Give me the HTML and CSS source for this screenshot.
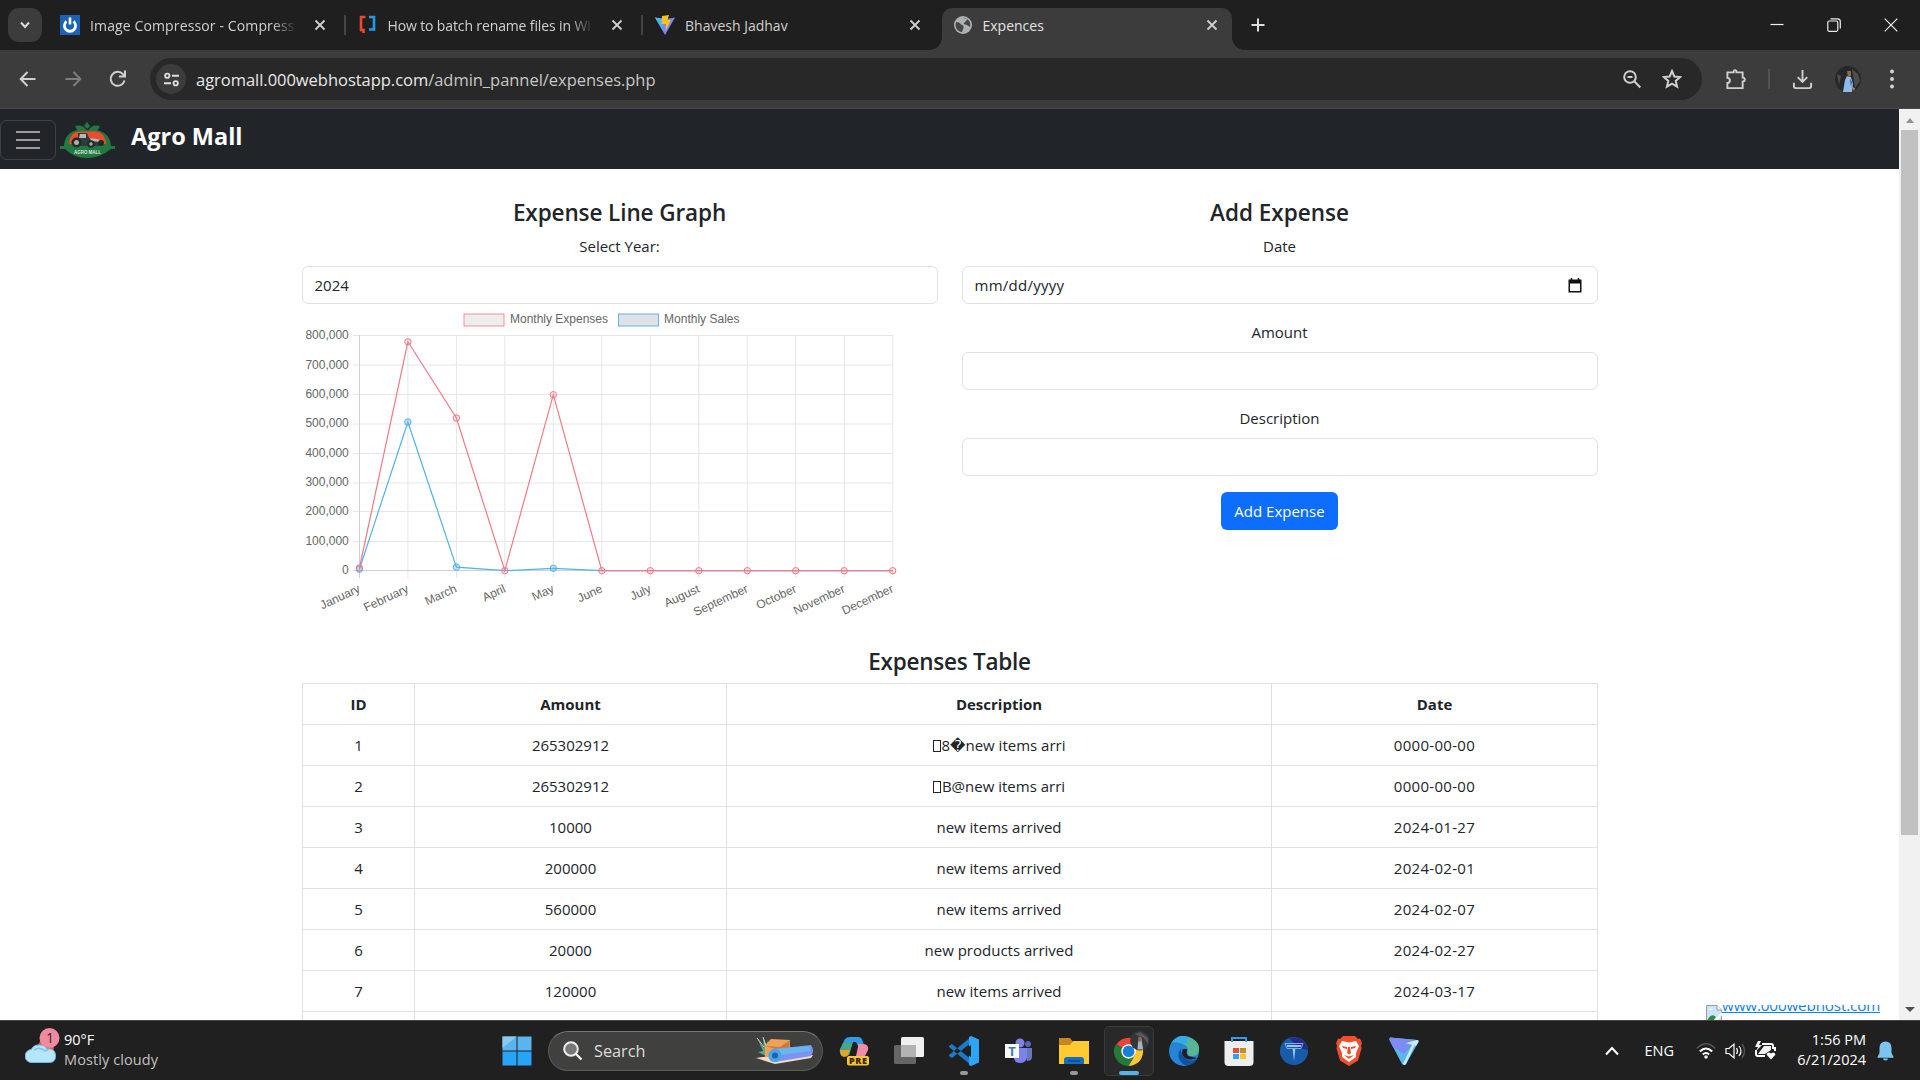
FILE: index.html
```
<!DOCTYPE html>
<html lang="en">
<head>
<meta charset="utf-8">
<title>Expences</title>
<link rel="stylesheet" href="styles.css">
</head>
<body>
<header class="tabstrip">
  <button class="tab-search"><svg width="14" height="14" viewBox="0 0 14 14"><path d="M3 4.500l4 4.500 4-4.500" class="ln w2"/></svg></button>
  <div class="tab">
    <svg class="fav" viewBox="0 0 20 20"><rect width="20" height="20" fill="#1c63b7"/><path d="M6.500 6.300A5.600 5.600 0 1 0 13.500 6.300" fill="none" stroke="#fff" stroke-width="2.800"/><path d="M10 2.500v7" stroke="#fff" stroke-width="2.600"/></svg>
    <span class="tab-title fade t1">Image Compressor - Compress</span>
    <svg class="x" viewBox="0 0 12 12"><path d="M1.500 1.500l9 9m0-9l-9 9"/></svg>
  </div>
  <div class="tab">
    <svg class="fav" viewBox="0 0 20 20"><path d="M7.500 2H3v13h2.500v3" fill="none" stroke="#f0482f" stroke-width="2.600"/><path d="M11 2h5v12.500h-5" fill="none" stroke="#1e9bf0" stroke-width="2.600"/></svg>
    <span class="tab-title fade t2">How to batch rename files in Wi</span>
    <svg class="x" viewBox="0 0 12 12"><path d="M1.500 1.500l9 9m0-9l-9 9"/></svg>
  </div>
  <div class="tab last">
    <svg class="fav" viewBox="0 0 20 20"><path d="M0 2.500L10 20 20 2.500l-9 1.600z" fill="#7b83f5"/><path d="M0 2.500l7 1.200 1 12z" fill="#47b5f0"/><path d="M7 1l7-1-1.500 5H16l-5.500 11 .5-7H6.500z" fill="#fcc21b"/></svg>
    <span class="tab-title t3">Bhavesh Jadhav</span>
    <svg class="x" viewBox="0 0 12 12"><path d="M1.500 1.500l9 9m0-9l-9 9"/></svg>
  </div>
  <div class="tab active">
    <svg class="fav globe" viewBox="0 0 18 18"><circle cx="9" cy="9" r="9" fill="#aeb1b3"/><path d="M2 6c3 0 4 1 5 2.500 2 1 3 1 2.500 3.500L8 16C4 15.500 1.500 12.500 1.600 9zM9 1.800c1 0 3 .3 4.500 1.500L11 6 9.500 8 13 9l3 2c.8-3 0-6-2.500-7.700z" fill="#474747"/></svg>
    <span class="tab-title t4">Expences</span>
    <svg class="x" viewBox="0 0 12 12"><path d="M1.500 1.500l9 9m0-9l-9 9"/></svg>
  </div>
  <svg class="newtab" viewBox="0 0 14 14"><path d="M7 .5v13M.5 7h13" class="ln w2"/></svg>
  <div class="window-buttons">
    <svg viewBox="0 0 14 14"><path d="M.5 6.500h13" class="ln"/></svg>
    <svg viewBox="0 0 14 14"><rect x=".8" y="3" width="10" height="10.300" rx="1.500" class="ln"/><path d="M3.500 .8h7q2.800 0 2.800 2.800v7" class="ln"/></svg>
    <svg viewBox="0 0 14 14"><path d="M.7.7l12.600 12.600m0-12.600L.7 13.300" class="ln"/></svg>
  </div>
</header>

<div class="toolbar">
  <div class="nav-icons">
    <svg viewBox="0 0 20 20"><path d="M17.500 10H3M9.500 3L2.700 10l6.800 7" class="ln w2"/></svg>
    <svg viewBox="0 0 20 20" class="dim"><path d="M2.500 10H17M10.500 3l6.800 7-6.800 7" class="ln w2"/></svg>
    <svg viewBox="0 0 20 20"><path d="M16.500 11.500A7 7 0 1 1 15 5.200L17 7M17 1.500V7.500H11" class="ln w2"/></svg>
  </div>
  <div class="omnibox">
    <span class="siteinfo"><svg width="17" height="15" viewBox="0 0 18 16"><circle cx="4.500" cy="4" r="2.300" class="ln w2"/><circle cx="13.500" cy="12" r="2.300" class="ln w2"/><path d="M9.500 4H17M1 12h7.500" class="ln w2"/></svg></span>
    <span class="url">agromall.000webhostapp.com<i>/admin_pannel/expenses.php</i></span>
    <svg class="ob" viewBox="0 0 20 20"><circle cx="8" cy="8" r="5.800" class="ln w2"/><path d="M12.300 12.300l6 6.200M5.500 8h5" class="ln w2"/></svg>
    <svg class="ob" viewBox="0 0 20 20"><path d="M10 2l2.300 5.500 5.900.5-4.500 3.900 1.400 5.800L10 14.600l-5.100 3.100 1.400-5.800L1.800 8l5.900-.5z" class="ln w2"/></svg>
  </div>
  <svg class="ext" viewBox="0 0 22 24"><path d="M3 4.500h6C8.500 1.500 12.500 1.500 12 4.500h6.500V10c3 0 3 4 0 4.300V21H2.500v-5.500c3.500 0 3.500-5 0-5.200V4.500z" class="ln w2"/></svg>
  <i class="vsep"></i>
  <svg class="dl" viewBox="0 0 22 22"><path d="M11 1v12M6 8.500l5 5 5-5M2 14.500v3.700q0 1.800 1.800 1.800h14.400q1.800 0 1.800-1.800v-3.700" class="ln w2"/></svg>
  <svg class="avatar" viewBox="0 0 26 26"><circle cx="13" cy="13" r="13" fill="#25282a"/><path d="M17 3l6 5 2 7-5 7zM2 8l4 2-2 9z" fill="#4b4d4f"/><path d="M10 14l2-4 4 1 2 7-1 8H8z" fill="#8fb9e8"/><path d="M12 5h4v5l-3 1z" fill="#95683f"/><path d="M15 13l2 3-1 5z" fill="#335b9c"/><path d="M17 21l3 1-1 3z" fill="#d28a4d"/></svg>
  <svg class="dots" viewBox="0 0 6 20"><circle cx="3" cy="2.500" r="2"/><circle cx="3" cy="10" r="2"/><circle cx="3" cy="17.500" r="2"/></svg>
</div>

<div class="viewport">
  <div class="page">
    <nav class="navbar">
      <button class="toggler"><i></i><i></i><i></i></button>
      <svg class="logo" viewBox="0 0 55 36"><path d="M27 0l3 4-2.500 3L24 4zM15 4q8-2 12 5-9 3-12-5zM40 4q-8-2-12 5 9 3 12-5z" fill="#217a41"/><path d="M4 24Q5 10 18 8h19q13 3 14 16l4 0v3H51Q40 36 27 36T5 27H0v-3z" fill="#217a41"/><path d="M9 22Q10 9 21 9.500h14Q45 10 46 22z" fill="#ee4b2b"/><path d="M18 11h9l2 5 14 3v5H15l-1-6 4-1z" fill="#2c3e38"/><path d="M20 12h6v4h-7zM30 16l10 1.500-1 2.500-8-1z" fill="#b6b9b5"/><circle cx="16.500" cy="20.500" r="5" fill="#24292a"/><circle cx="16.500" cy="20.500" r="2.500" fill="#aab1ad"/><circle cx="31" cy="22" r="3.800" fill="#24292a"/><circle cx="31" cy="22" r="1.700" fill="#aab1ad"/><circle cx="41" cy="21" r="3" fill="#24292a"/><text x="14" y="31.500" textLength="27" font-size="4.500" font-weight="700" fill="#dfe6df" font-family="Liberation Sans, sans-serif">AGRO MALL</text></svg>
      <span class="brand">Agro Mall</span>
    </nav>

    <main class="container">
      <div class="columns">
        <section class="col">
          <h4 class="h-graph">Expense Line Graph</h4>
          <label class="l-year">Select Year:</label>
          <div class="control">2024</div>
          <svg class="chart" viewBox="302 304 636 320">
            <g class="grid">
              <path d="M353 335.500H892.700M353 365H892.700M353 394.500H892.700M353 424H892.700M353 453.500H892.700M353 483H892.700M353 511.500H892.700M353 541.500H892.700"/>
              <path d="M407.900 335V578M456.400 335V578M504.800 335V578M553.300 335V578M601.800 335V578M650.300 335V578M698.800 335V578M747.300 335V578M795.700 335V578M844.200 335V578M892.700 335V578"/>
              <path class="axis" d="M359.500 335V578M353 570.500H892.700"/>
            </g>
            <g class="legend">
              <rect x="464" y="314" width="40" height="12" fill="#efeeee" stroke="#f2919e"/>
              <text x="510" y="323" textLength="98">Monthly Expenses</text>
              <rect x="618.500" y="314" width="40" height="12" fill="#dfe2e4" stroke="#5fb8ea"/>
              <text x="664" y="323" textLength="75.500">Monthly Sales</text>
            </g>
            <g class="yt">
              <text x="348.800" y="339">800,000</text><text x="348.800" y="369">700,000</text><text x="348.800" y="398">600,000</text><text x="348.800" y="427.400">500,000</text><text x="348.800" y="457">400,000</text><text x="348.800" y="486">300,000</text><text x="348.800" y="515.400">200,000</text><text x="348.800" y="545">100,000</text><text x="348.800" y="574">0</text>
            </g>
            <g class="yt">
              <text transform="translate(361 591.500) rotate(-25)">January</text><text transform="translate(409.500 591.500) rotate(-25)">February</text><text transform="translate(457.500 591.500) rotate(-25)">March</text><text transform="translate(506.400 591.500) rotate(-25)">April</text><text transform="translate(554.900 591.500) rotate(-25)">May</text><text transform="translate(603.400 591.500) rotate(-25)">June</text><text transform="translate(651.900 591.500) rotate(-25)">July</text><text transform="translate(700.400 591.500) rotate(-25)">August</text><text transform="translate(748.900 591.500) rotate(-25)">September</text><text transform="translate(797.300 591.500) rotate(-25)">October</text><text transform="translate(845.800 591.500) rotate(-25)">November</text><text transform="translate(894.300 591.500) rotate(-25)">December</text>
            </g>
            <g class="sales"><path d="M359.400 569.200L407.900 422L456.400 567.200L504.800 570.700L553.300 568.300L601.800 570.700H892.700"/><circle cx="359.400" cy="569.200" r="3.200"/><circle cx="407.900" cy="422" r="3.200"/><circle cx="456.400" cy="567.200" r="3.200"/><circle cx="553.300" cy="568.300" r="3.200"/></g>
            <g class="expenses"><path d="M359.400 568L407.900 341.800L456.400 418L504.800 570.700L553.300 394.700L601.800 570.700H892.700"/><circle cx="359.400" cy="568" r="3.200"/><circle cx="407.900" cy="341.800" r="3.200"/><circle cx="456.400" cy="418" r="3.200"/><circle cx="504.800" cy="570.700" r="3.200"/><circle cx="553.300" cy="394.700" r="3.200"/><circle cx="601.800" cy="570.700" r="3.200"/><circle cx="650.300" cy="570.700" r="3.200"/><circle cx="698.800" cy="570.700" r="3.200"/><circle cx="747.300" cy="570.700" r="3.200"/><circle cx="795.700" cy="570.700" r="3.200"/><circle cx="844.200" cy="570.700" r="3.200"/><circle cx="892.700" cy="570.700" r="3.200"/></g>
          </svg>
        </section>
        <section class="col">
          <h4 class="h-add">Add Expense</h4>
          <label>Date</label>
          <div class="control date"><span class="mask">mm/dd/yyyy</span><svg width="14" height="15" viewBox="0 0 14 15"><path d="M.5 1.500h13v13H.5zM2 5.500V13h10V5.500z" fill="#111" fill-rule="evenodd"/><path d="M3.500 0v2M10.500 0v2" stroke="#111" stroke-width="1.500"/></svg></div>
          <label>Amount</label>
          <div class="control"></div>
          <label>Description</label>
          <div class="control"></div>
          <button class="btn">Add Expense</button>
        </section>
      </div>
      <h4 class="h-table">Expenses Table</h4>
      <table>
        <colgroup><col class="c1"><col class="c2"><col class="c3"><col class="c4"></colgroup>
        <tr><th>ID</th><th>Amount</th><th>Description</th><th>Date</th></tr>
        <tr><td>1</td><td>265302912</td><td><i class="tofu"></i>8<span class="rep">&#xFFFD;</span>new items arri</td><td class="d">0000-00-00</td></tr>
        <tr><td>2</td><td>265302912</td><td><i class="tofu"></i>B@new items arri</td><td class="d">0000-00-00</td></tr>
        <tr><td>3</td><td>10000</td><td>new items arrived</td><td class="d">2024-01-27</td></tr>
        <tr><td>4</td><td>200000</td><td>new items arrived</td><td class="d">2024-02-01</td></tr>
        <tr><td>5</td><td>560000</td><td>new items arrived</td><td class="d">2024-02-07</td></tr>
        <tr><td>6</td><td>20000</td><td>new products arrived</td><td class="d">2024-02-27</td></tr>
        <tr><td>7</td><td>120000</td><td>new items arrived</td><td class="d">2024-03-17</td></tr>
        <tr><td></td><td></td><td></td><td></td></tr>
      </table>
    </main>
    <a class="hostlink"><svg width="16" height="16" viewBox="0 0 16 16"><path d="M.5.500H11L15.500 5V16H.5z" fill="#c9e6f7" stroke="#9a9a9a"/><path d="M11 .5V5h4.500" fill="#fff" stroke="#9a9a9a"/><path d="M3 5q2-3 4 0z" fill="#fff"/><path d="M1 16q4-9 9-4l-3 4z" fill="#2e8b45"/><path d="M7 16l9-9v3l-5 6z" fill="#fff"/></svg><span>www.000webhost.com</span></a>
  </div>
  <div class="scrollbar"><i class="up"></i><i class="thumb"></i><i class="down"></i></div>
</div>

<footer class="taskbar">
  <div class="weather">
    <svg width="38" height="38" viewBox="0 0 38 38"><circle cx="21" cy="19" r="8" fill="#ee5a24"/><path d="M7 34.500a6.500 6.500 0 0 1-.8-13Q9 16.500 14 17q6-.5 8 4 8-1 8.500 6 .5 7.500-6 7.500z" fill="#b5e6fb" stroke="#74b5f4"/><path d="M9 22q6-4 11 1l4-2" stroke="#7cc2f4" stroke-width="1.600" fill="none"/><circle cx="24.500" cy="10" r="10" fill="#f08aa0"/><text x="25" y="15" font-size="14" text-anchor="middle" fill="#33262a">1</text></svg>
    <p class="wtxt"><span class="temp">90°F</span><span class="cond">Mostly cloudy</span></p>
  </div>
  <div class="apps">
    <span class="app"><svg viewBox="0 0 30 30"><path d="M.5.500h14v14H.5zM15.500.500h14v14h-14z" fill="#5ab4ee"/><path d="M.5 15.500h14v14H.5zM15.500 15.500h14v14h-14z" fill="#27a4f8"/><path d="M.5.500h14L.5 12z" fill="#8bcaf0"/></svg></span>
    <div class="search">
      <svg width="20" height="20" viewBox="0 0 20 20"><circle cx="8" cy="8" r="6.800" fill="#777" stroke="#eee" stroke-width="2"/><path d="M13 13l5.500 5.500" stroke="#eee" stroke-width="2.400"/></svg>
      <span>Search</span>
      <svg class="beach" width="60" height="28" viewBox="0 0 60 28"><path d="M0 21l14-2 43-1-2 3-36 6z" fill="#f4d9c6"/><path d="M2 3l6 8-1-10 5 10-1-8 4 11-5 5-8-4 5-1z" fill="#4fae8c"/><path d="M1 1l7 9M7 0l3 9" stroke="#d4d4d4"/><path d="M9 8l6-6 19 1v10L21 20H9z" fill="#f0a158"/><path d="M9 9l15 1 10-7-1 8-10 2z" fill="#cc7a38"/><path d="M18 12l37-4q4 6 0 11l-36 6z" fill="#7d92f4"/><path d="M18 12l36-3v5l-36 5z" fill="#67b6ed"/><circle cx="19" cy="18.500" r="6.800" fill="#4aa5e8"/><circle cx="19" cy="18.500" r="3" fill="#2162a9"/></svg>
    </div>
    <span class="app"><svg viewBox="0 0 30 30"><path d="M6 3q2-2 5-2h8q4 0 5 5l1 4h-6l-2-4h-3l-4 13-7 1q-3-3-2-7z" fill="#2f9de4"/><path d="M4 7h9l-3 12q-1 1-4 1-5-1-4-6z" fill="#4ca77c"/><path d="M1 14h10l-2 5q-1 2-4 2-4-1-4-6z" fill="#e3a42a"/><path d="M19 8h6q5 1 4 6l-3 6h-9l2-9z" fill="#ef8ca7"/><rect x="8" y="20" width="22" height="9.500" rx="2" fill="#fcc62e"/><text x="10" y="27.800" font-size="9" font-weight="800" textLength="18" fill="#332700">PRE</text></svg></span>
    <span class="app"><svg viewBox="0 0 30 30"><rect x="0" y="9" width="22" height="19" rx="1.500" fill="#656567"/><rect x="7" y="1" width="23" height="20" rx="1.500" fill="#f0f0f0"/><path d="M7 9h15v12H7z" fill="#b3b3b3"/></svg></span>
    <span class="app run"><svg viewBox="0 0 30 30"><path d="M0 10l3-2 20 16v6L0 11zM0 20l3 2L23 6V0L0 19z" fill="#1c79c8"/><path d="M22 0l8 3.500v23L22 30 20 29V1z" fill="#2ba5f7"/><path d="M22 9v12l-8-6z" fill="#202020"/></svg></span>
    <span class="app"><svg viewBox="0 0 30 30"><circle cx="16" cy="7" r="4.500" fill="#7b83eb"/><circle cx="24" cy="8" r="3" fill="#5963b9"/><path d="M20 12h8v9q0 4-5 4z" fill="#6877bd"/><path d="M10 12h13v9q-1 6-7 6-5 0-6-5z" fill="#7b83eb"/><rect x="1" y="8" width="14" height="14" fill="#f7f8fa"/><text x="8" y="20" text-anchor="middle" font-size="13" font-weight="700" fill="#3e80a4">T</text></svg></span>
    <span class="app run"><svg viewBox="0 0 30 30"><path d="M0 2h11l3 4h12v8H0z" fill="#c98522"/><path d="M0 9h11l3-4h16v23H0z" fill="#ffcb30"/><path d="M5 28v-4q0-3 3-3h14q3 0 3 3v4z" fill="#176dbd"/><path d="M9 25h12" stroke="#0c4a91" stroke-width="1.500"/></svg></span>
    <span class="app current"><svg class="wide" viewBox="0 0 38 36"><path d="M15 21L2.500 14A15 15 0 0 1 28 14z" fill="#ea4534"/><path d="M15 21L2 13.500A15 15 0 0 0 15 36l7-12z" fill="#26793a"/><path d="M15 21L28.200 14A15 15 0 0 1 15 36l7-12z" fill="#fcc72f"/><circle cx="15" cy="21" r="7.500" fill="#fff"/><circle cx="15" cy="21" r="6" fill="#1a7fd6"/><circle cx="26.500" cy="10" r="10" fill="#34363a"/><path d="M21 3l6-2 8 6v6l-5-6z" fill="#55585c"/><path d="M24 19l1-9 3-3 2 12z" fill="#a5b2c4"/><path d="M25 6h3v5h-3z" fill="#9a6b46"/></svg></span>
    <span class="app"><svg viewBox="0 0 30 30"><circle cx="15" cy="15" r="15" fill="#2584d8"/><path d="M4 5Q13-3 24 3q7 4 6 12-1 5-7 5-6 0-4-6 0-4-5-6Q7 6 4 5z" fill="#56b797"/><path d="M2 7Q9-3 19 1q-1 3-1 7Q8 5 2 7z" fill="#35a8ee"/><path d="M12 12q-6 9 2 16 8 4 14-5-6 3-11 0-6-4-5-11z" fill="#12509d"/><path d="M14 13q-3 5 2 9 5 3 12 0l-9-2q-2-3-1-7z" fill="#202020"/></svg></span>
    <span class="app"><svg viewBox="0 0 30 30"><path d="M.5 5h29v21q0 4-4 4H4.500q-4 0-4-4z" fill="#eee"/><path d="M8 6V2h14v4" fill="none" stroke="#2b9ef1" stroke-width="2"/><path d="M9 12h6v5H9z" fill="#eb4c2f"/><path d="M16 12h6v5h-6z" fill="#c58d27"/><path d="M9 18h6v5H9z" fill="#2aa4f5"/><path d="M16 18h6v5h-6z" fill="#fcc52e"/></svg></span>
    <span class="app"><svg viewBox="0 0 30 30"><circle cx="15" cy="15" r="14" fill="#165ca9"/><path d="M10 2Q25-1 29 14L20 12z" fill="#26288a"/><path d="M8 10h14" stroke="#a2c4eb" stroke-width="2"/><path d="M13.500 12h3L15 25z" fill="#a2c4eb"/><path d="M6 7.500h18l-2 5H8z" fill="none" stroke="#7caee4" stroke-width="1"/></svg></span>
    <span class="app"><svg viewBox="0 0 30 30"><path d="M9 0h12l3 3 2-.5 2 5-1 2 .5 3-3.500 12L15 30 6 24.500 2.500 12.500l.5-3L2 7.500l2-5 2 .5z" fill="#f04e2c"/><path d="M8 5l7 1.500L22 5l3 5-3 7v4l-7 5-7-5v-4l-3-7z" fill="#fff"/><path d="M8 10l5 1v2l-4-1zM22 10l-5 1v2l4-1zM14 11h2l1 6-2 1.500L13 17zM10 19l5 1.500 5-1.500-5 4z" fill="#f04e2c"/></svg></span>
    <span class="app"><svg viewBox="0 0 30 30"><path d="M1 1.500Q-.5 3 1 5l12 23q2 2 4 0L29.500 6Q30 4 28 4z" fill="#5cb8ec"/><path d="M28 4L17 28q-1.500 2-3 0l9-19z" fill="#c3edf8"/><path d="M1 1.500L28 4 15 8l8 1-8 9L4 11 1 5z" fill="#7c8cf4"/><path d="M17 7l11-3q2 0 1.500 2L27 10z" fill="#c3edf8"/></svg></span>
  </div>
  <div class="tray">
    <svg class="chev" width="16" height="10" viewBox="0 0 16 10"><path d="M2 8.500L8 2l6 6.500" class="ln w2"/></svg>
    <span class="lang">ENG</span>
    <svg class="wifi" width="20" height="18" viewBox="0 0 20 18"><path d="M.8 6.500Q10-3 19.200 6.500" fill="none" stroke="#555" stroke-width="1.600"/><path d="M3.800 9.500q6.200-6 12.400 0M6.800 12.500q3.200-3 6.400 0" class="ln w2"/><circle cx="10" cy="15" r="1.800" fill="#eee"/></svg>
    <svg class="snd" width="21" height="18" viewBox="0 0 21 18"><path d="M1 6.500h3L9 2v14l-5-4.500H1zM11.500 6q2 3 0 6M14 4q4 5 0 10" class="ln"/><path d="M17 2q5 7 0 14" fill="none" stroke="#555" stroke-width="1.400"/></svg>
    <svg class="bat" width="21" height="19" viewBox="0 0 21 19"><path d="M7 3h9q2 0 2 2v2h2v3M10 15H3q-2 0-2-2V9" class="ln w2"/><path d="M3 0L0 6h3L1 10l6-6H4l2-4zM9 5h7v4l-6 4H3z" fill="#f3f3f3"/><path d="M16 18.500l-4.500-5q1.500-3.500 4.500-1 3-2.500 4.500 1z" fill="#fff"/></svg>
    <p class="clock"><span>1:56 PM</span><span class="day">6/21/2024</span></p>
    <svg class="bell" width="17" height="20" viewBox="0 0 17 20"><path d="M2.500 12V7q0-6.500 6-6.500t6 6.500v5l2 4v.7H.5V16z" fill="#7cc4ef"/><path d="M6 17.500h5q0 2-2.500 2T6 17.500z" fill="#7cc4ef"/></svg>
  </div>
</footer>
</body>
</html>
```
FILE: styles.css
```
* { box-sizing: border-box; }
html, body { margin: 0; height: 100%; overflow: hidden; }
body { display: flex; flex-direction: column; width: 1920px; height: 1080px; font-family: "Open Sans", "Noto Sans", sans-serif; font-size: 15px; background: #fff; color: #212529; }
svg { display: block; flex: none; }
p { margin: 0; }
button { font: inherit; padding: 0; border: 0; }
.ln { fill: none; stroke: currentColor; stroke-width: 1.2; }
.ln.w2 { stroke-width: 2; }

.tabstrip { height: 50px; flex: none; display: flex; align-items: center; background: #1f1f1f; color: #d0d0d0; padding-left: 8px; }
.tab-search { width: 34px; height: 34px; margin-right: 6px; border-radius: 11px; background: #3c3c3c; color: #ddd; display: flex; align-items: center; justify-content: center; }
.tab { width: 297.500px; height: 34px; display: flex; align-items: center; padding: 0 20px 0 12px; position: relative; font-size: 14px; }
.tab:not(.last):not(.active)::after { content: ""; width: 2px; height: 20px; background: #444; position: absolute; right: 0; top: 7px; }
.fav { width: 20px; height: 20px; margin-right: 10px; }
.tab-title { flex: 1; white-space: nowrap; overflow: hidden; }
.fade { -webkit-mask-image: linear-gradient(to right, #000 88%, transparent); mask-image: linear-gradient(to right, #000 88%, transparent); margin-right: 17px; }
.t1 { letter-spacing: .13px; }
.t2 { letter-spacing: -.13px; }
.x { width: 12px; height: 12px; fill: none; stroke: #d0d0d0; stroke-width: 1.800; }
.tab.active { width: 290px; height: 42px; align-self: flex-end; background: #3c3c3c; border-radius: 10px 10px 0 0; color: #e3e3e3; margin-left: 1px; padding: 0 14px 8px 12px; }
.tab.active::before, .tab.active::after { content: ""; position: absolute; bottom: 0; width: 12px; height: 12px; }
.tab.active::before { left: -12px; background: radial-gradient(circle at 0 0, transparent 11.500px, #3c3c3c 12px); }
.tab.active::after { right: -12px; background: radial-gradient(circle at 100% 0, transparent 11.500px, #3c3c3c 12px); }
.globe { width: 18px; height: 18px; margin-right: 11px; }
.newtab { width: 14px; height: 14px; margin-left: 19px; color: #ddd; }
.window-buttons { margin-left: auto; display: flex; gap: 43px; padding-right: 22px; color: #eee; }
.window-buttons svg { width: 14px; height: 14px; }

.toolbar { height: 59px; flex: none; display: flex; align-items: center; background: #3c3c3c; color: #cfcfcf; border-bottom: 1px solid #474747; }
.nav-icons { display: flex; gap: 25px; padding-left: 18px; width: 150px; }
.nav-icons svg { width: 20px; height: 20px; }
.dim { color: #7d7d7d; }
.omnibox { width: 1552px; height: 42px; border-radius: 21px; background: #282828; display: flex; align-items: center; padding: 0 20px 0 6px; gap: 20px; }
.siteinfo { width: 30px; height: 30px; border-radius: 50%; background: #3c3c3c; display: flex; align-items: center; justify-content: center; margin-right: -10px; color: #ddd; }
.url { flex: 1; font-size: 16.500px; letter-spacing: -.03px; color: #e8e8e8; }
.url i { font-style: normal; color: #c7c7c7; }
.ob { width: 20px; height: 20px; }
.ext { width: 21px; height: 23px; margin-left: 23px; }
.vsep { width: 2px; height: 20px; background: #515355; margin-left: 22px; }
.dl { width: 21px; height: 21px; margin-left: 22px; }
.avatar { width: 26px; height: 26px; margin-left: 22px; }
.dots { width: 6px; height: 20px; margin-left: 28px; fill: #d3d3d3; }

.viewport { height: 911px; flex: none; display: flex; overflow: hidden; }
.page { width: 1899px; overflow: hidden; position: relative; }
.navbar { height: 60px; background: #212529; display: flex; align-items: center; }
.toggler { width: 56px; height: 40px; border: 1px solid #3d4145; border-radius: 6px; background: none; display: flex; flex-direction: column; align-items: center; justify-content: center; gap: 6px; margin: 2px 4px 0 0; }
.toggler i { width: 24px; height: 2px; background: #9b9d9f; }
.logo { width: 55px; height: 36px; margin-top: 2px; }
.brand { margin: -7px 0 0 16px; font-size: 23.500px; font-weight: 700; color: #fff; }

.container { width: 1320px; margin: 0 auto; padding: 28px 12px 0; }
.columns { display: grid; grid-template-columns: 1fr 1fr; gap: 24px; height: 448px; }
.col { display: flex; flex-direction: column; align-items: center; }
h4 { margin: 0; height: 29px; line-height: 31px; font-size: 22.500px; font-weight: 600; text-align: center; }
.h-graph { letter-spacing: -.1px; }
label { line-height: 24px; margin: 8px 0; }
.control { width: 100%; height: 38px; border: 1px solid #dee2e6; border-radius: 6px; padding: 0 12px; line-height: 36px; display: flex; align-items: center; justify-content: space-between; }
.control + label { margin-top: 16px; }
.date { padding-right: 15px; }
.mask { letter-spacing: .25px; }
.chart { width: 636px; height: 320px; }
.chart text { font: 12px "Liberation Sans", Arial, sans-serif; fill: #666; }
.yt text { text-anchor: end; }
.grid path { fill: none; stroke: #e6e6e6; stroke-width: 1; }
.grid .axis { stroke: #cfd2d3; }
.sales path, .expenses path { fill: none; stroke-width: 1.200; }
.sales { stroke: #50b2ea; fill: #59b8ec55; }
.expenses { stroke: #ee7a88; fill: #f0879433; }
.btn { margin-top: 16px; width: 117px; height: 38px; border-radius: 6px; background: #0d6efd; color: #fff; }
.h-table { margin-top: 2px; line-height: 29px; letter-spacing: -.25px; }
table { width: 1296px; margin-top: 7px; border-collapse: collapse; table-layout: fixed; text-align: center; }
.c1 { width: 112px; } .c2 { width: 312px; } .c3 { width: 545px; } .c4 { width: 326px; }
td, th { height: 41px; padding: 0 0 1px 1px; border: 1px solid #dee2e6; }
.d { letter-spacing: .3px; }
.tofu { display: inline-block; width: 8px; height: 12px; border: 1px solid #212529; margin-right: 1px; vertical-align: -1px; }
.rep { font-family: "DejaVu Sans", sans-serif; font-size: 15px; line-height: 1; }
.hostlink { position: absolute; right: 19px; bottom: 0; height: 15px; display: flex; overflow: hidden; color: #0d7ff0; }
.hostlink span { width: 158px; font-size: 15.200px; letter-spacing: -.13px; white-space: nowrap; line-height: 18px; margin-top: -9px; height: 24px; text-decoration: underline; }
.scrollbar { width: 21px; background: #f1f1f1; display: flex; flex-direction: column; align-items: center; padding: 9px 0 8px; }
.up { border: 4px solid transparent; border-top: 0; border-bottom: 5px solid #929292; }
.thumb { width: 17px; height: 705px; background: #c1c1c1; margin-top: 7px; }
.down { border: 5px solid transparent; border-bottom: 0; border-top: 5px solid #505050; margin-top: auto; }

.taskbar { height: 60px; flex: none; background: #202020; border-top: 1px solid #424242; display: flex; align-items: center; color: #fff; }
.weather { width: 490px; padding-left: 25px; display: flex; align-items: center; gap: 1px; }
.weather svg { margin-top: -8px; }
.wtxt, .clock { display: flex; flex-direction: column; font-size: 14.500px; line-height: 20px; margin-top: -2px; }
.cond { color: #c0c0c0; letter-spacing: .1px; }
.apps { display: flex; align-items: center; }
.app { width: 50px; height: 50px; margin-right: 5px; display: flex; align-items: center; justify-content: center; position: relative; }
.app:first-child { width: 54px; margin-right: 4px; }
.app svg { width: 30px; height: 30px; }
.app .wide { width: 37px; height: 35px; margin: -4px 0 0 6px; }
.search { width: 275px; height: 40px; margin-right: 6px; border: 1px solid #5a5a5a; border-top-color: #777; border-radius: 20px; background: #40403f; display: flex; align-items: center; padding: 0 6px 0 14px; font-size: 16.300px; color: #ddd; gap: 11px; }
.beach { margin-left: auto; }
.current { background: #292929; border: 1px solid #3b3b3b; border-radius: 5px; }
.run::after, .current::after { content: ""; position: absolute; bottom: 1px; width: 8px; height: 4px; border-radius: 2px; background: #999; }
.current::after { width: 20px; bottom: 0; background: #56b3e9; }
.tray { margin-left: auto; display: flex; align-items: center; padding-right: 26px; }
.lang { margin-left: 24px; font-size: 14.500px; }
.wifi { margin-left: 22px; }
.snd { margin-left: 9px; }
.bat { margin-left: 9px; }
.clock { width: 90px; text-align: right; }
.bell { margin-left: 11px; }
```
